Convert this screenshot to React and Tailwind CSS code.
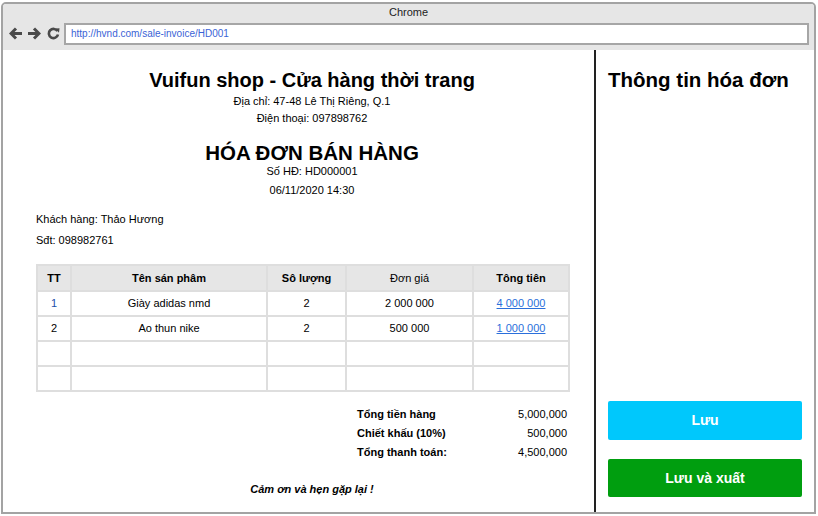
import React from "react";

const F = { fontFamily: '"Liberation Sans", Arial, sans-serif' };

function Back() {
  return (
    <svg width="14" height="13" viewBox="0 0 14 13">
      <path d="M7 1.5 L2 6.5 L7 11.5 M2 6.5 H13" fill="none" stroke="#4a4a4a" strokeWidth="3" strokeLinejoin="miter" />
    </svg>
  );
}
function Fwd() {
  return (
    <svg width="14" height="13" viewBox="0 0 14 13">
      <path d="M7 1.5 L12 6.5 L7 11.5 M12 6.5 H1" fill="none" stroke="#4a4a4a" strokeWidth="3" strokeLinejoin="miter" />
    </svg>
  );
}
function Reload() {
  return (
    <svg width="13" height="13" viewBox="0 0 13 13">
      <path d="M10.5 4.2 A4.6 4.6 0 1 0 11 7.5" fill="none" stroke="#4a4a4a" strokeWidth="2.6" />
      <path d="M8 1.5 L12.5 1.2 L12 5.8 Z" fill="#4a4a4a" />
    </svg>
  );
}

const cols = [
  "w-[34px]",
  "w-[196px]",
  "w-[79px]",
  "w-[127px]",
  "w-[96px]",
];

const cell = "border-2 border-[#dedede]";

export default function App() {
  return (
    <div className="w-[818px] h-[516px] bg-white text-black relative overflow-hidden" style={F}>
      <div className="ml-[1px] mt-[2px] w-[815px] h-[512px] border-2 border-[#a3a3a3] rounded-t-[5px] flex flex-col overflow-hidden">
        {/* title bar */}
        <div className="h-[46px] bg-[#e6e6e6] flex flex-col shrink-0">
          <div className="h-[17px] text-[11px] leading-[17px] text-center text-[#222]">Chrome</div>
          <div className="flex items-center h-[23px] mt-[1px]">
            <div className="flex items-center w-[61px] pl-[6px] gap-[4px]">
              <Back />
              <Fwd />
              <span className="ml-[2px]"><Reload /></span>
            </div>
            <div className="w-[745px] h-[22px] bg-white border-2 border-[#a6a6a6] flex items-center pl-[5px] text-[10px] text-[#3a63d6]">
              http://hvnd.com/sale-invoice/HD001
            </div>
          </div>
        </div>
        {/* content */}
        <div className="flex flex-1 min-h-0">
          {/* left pane */}
          <div className="w-[591px] flex flex-col pl-[33px]">
            <div className="w-[552px] flex flex-col items-center text-center">
              <div className="mt-[17px] text-[20px] font-bold leading-[26px]">Vuifun shop - Cửa hàng thời trang</div>
              <div className="text-[11px] leading-[17px]">Địa chỉ: 47-48 Lê Thị Riêng, Q.1</div>
              <div className="text-[11px] leading-[17px]">Điện thoại: 097898762</div>
              <div className="mt-[16px] text-[20.5px] font-bold leading-[19px]">HÓA ĐƠN BÁN HÀNG</div>
              <div className="text-[11px] leading-[19px]">Số HĐ: HD000001</div>
              <div className="text-[11px] leading-[19px]">06/11/2020 14:30</div>
            </div>
            <div className="mt-[9px] text-[11px] leading-[21px]">Khách hàng: Thảo Hương</div>
            <div className="text-[11px] leading-[21px]">Sđt: 098982761</div>
            <table className="mt-[13px] w-[533px] border-collapse text-[11px] text-center table-fixed">
              <thead>
                <tr className="h-[26px] bg-[#e6e6e6]">
                  <th className={`${cols[0]} ${cell} font-bold`}>TT</th>
                  <th className={`${cols[1]} ${cell} font-bold`}>Tên sán phâm</th>
                  <th className={`${cols[2]} ${cell} font-bold`}>Sô lượng</th>
                  <th className={`${cols[3]} ${cell} font-normal`}>Đơn giá</th>
                  <th className={`${cols[4]} ${cell} font-bold`}>Tông tiên</th>
                </tr>
              </thead>
              <tbody>
                <tr className="h-[25px]">
                  <td className={`${cell} text-[#1c4fa8]`}>1</td>
                  <td className={cell}>Giày adidas nmd</td>
                  <td className={cell}>2</td>
                  <td className={cell}>2 000 000</td>
                  <td className={cell}><span className="text-[#2a6fdb] underline">4 000 000</span></td>
                </tr>
                <tr className="h-[25px]">
                  <td className={cell}>2</td>
                  <td className={cell}>Ao thun nike</td>
                  <td className={cell}>2</td>
                  <td className={cell}>500 000</td>
                  <td className={cell}><span className="text-[#2a6fdb] underline">1 000 000</span></td>
                </tr>
                <tr className="h-[25px]">
                  <td className={cell}></td>
                  <td className={cell}></td>
                  <td className={cell}></td>
                  <td className={cell}></td>
                  <td className={cell}></td>
                </tr>
                <tr className="h-[25px]">
                  <td className={cell}></td>
                  <td className={cell}></td>
                  <td className={cell}></td>
                  <td className={cell}></td>
                  <td className={cell}></td>
                </tr>
              </tbody>
            </table>
            <div className="mt-[13px] ml-[321px] w-[210px] text-[11px]">
              <div className="flex justify-between leading-[19px]"><span className="font-bold">Tổng tiền hàng</span><span>5,000,000</span></div>
              <div className="flex justify-between leading-[19px]"><span className="font-bold">Chiết khấu (10%)</span><span>500,000</span></div>
              <div className="flex justify-between leading-[18px]"><span className="font-bold">Tổng thanh toán:</span><span>4,500,000</span></div>
            </div>
            <div className="mt-[19px] w-[552px] text-center text-[11px] leading-[19px] font-bold italic">Cảm ơn và hẹn gặp lại !</div>
          </div>
          {/* divider */}
          <div className="w-[2px] bg-[#222] shrink-0"></div>
          {/* right pane */}
          <div className="flex-1 flex flex-col pl-[12px] pr-[8px] pb-[15px]">
            <div className="mt-[17px] text-[20.5px] font-bold leading-[26px]">Thông tin hóa đơn</div>
            <div className="mt-auto flex flex-col gap-[19px]">
              <button className="h-[39px] w-[194px] rounded-[2px] bg-[#00c8fc] text-white text-[14px] font-bold">Lưu</button>
              <button className="h-[38px] w-[194px] rounded-[2px] bg-[#009e0f] text-white text-[14px] font-bold">Lưu và xuất</button>
            </div>
          </div>
        </div>
      </div>
    </div>
  );
}
